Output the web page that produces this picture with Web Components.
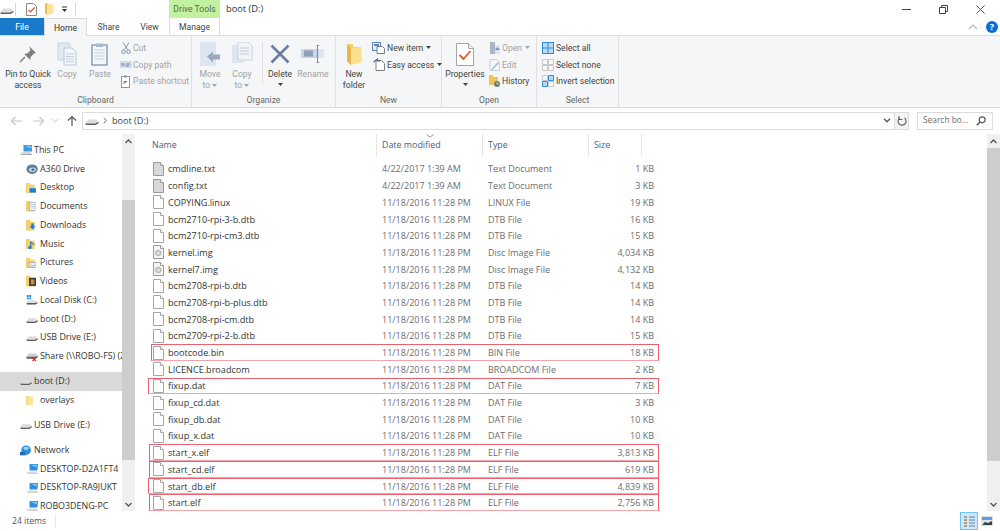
<!DOCTYPE html>
<html><head><meta charset="utf-8">
<style>
html,body{margin:0;padding:0;background:#fff;overflow:hidden}
body{font:9px/1 "Open Sans",sans-serif;color:#3c3c3c}
</style></head><body>
<win-app></win-app>
<script>
const ICONS={
drive:[14,8,'<path d="M3 2.5h8l2.5 2.5v1l-3 1.5H1L.5 6z" fill="#dcdcdc"/><path d="M.5 6l10 .2 3-1.2v1.2L10.5 8H1z" fill="#5c5c5c"/><path d="M1 6.3h9.4" stroke="#fff" stroke-width=".5"/>'],
doccheck:[11,13,'<path d="M.5.5h7l3 3v9H.5z" fill="#fff" stroke="#8a8a8a"/><path d="M2.5 7l2 2 4-4.5" fill="none" stroke="#e0501e" stroke-width="1.2"/>'],
folder:[10,12,'<path d="M1 0h3.5v1.5H9V10H1z" fill="#f5d67e"/><path d="M3 1.5l6.5-.5v9L3 12z" fill="#fbe39a"/><path d="M1 0v10l2 2V1.5z" fill="#eebd4e"/>'],
qa:[7,7,'<path d="M1 1h5" stroke="#333"/><path d="M1 3h5L3.5 6z" fill="#333"/>'],
pin:[18,18,'<path d="M10 1l7 7-2 .6-3.4 3.4-.4 3-6-6 3-.4L11.6 5.200z" fill="#7d7d82"/><path d="M6 12l-5 5" stroke="#7d7d82" stroke-width="1.5"/>'],
copy:[20,24,'<path d="M1 1h11l1 1v16H1z" fill="#e2e8f0" stroke="#c9d4e3"/><path d="M7 6h8l4 4v13H7z" fill="#f2f5f9" stroke="#b9c7da"/><path d="M9 12h8M9 14.500h8M9 17h8M9 19.500h8" stroke="#c3d0e0"/>'],
paste:[18,23,'<rect x="1" y="2" width="15" height="20" fill="#f4f6f9" stroke="#7f93b2" stroke-width="1.3"/><rect x="5" y=".5" width="7" height="3.500" fill="#a9b8cd"/><path d="M3.500 7h10M3.500 10h10M3.500 13h10M3.500 16h10" stroke="#c5d1e0"/>'],
cut:[10,12,'<path d="M2 .5l4.500 7M8 .5L3.500 7.500" stroke="#8d99ab" fill="none"/><circle cx="2.500" cy="9.700" r="1.800" fill="none" stroke="#7d90ad"/><circle cx="7.500" cy="9.700" r="1.800" fill="none" stroke="#7d90ad"/>'],
cpath:[12,7,'<rect width="12" height="7" fill="#cfdcee"/><path d="M2 2v3M4 2v3M6 3h4M6 5h3" stroke="#7a8aa0"/>'],
pshort:[9,13,'<rect x=".5" y="1.500" width="8" height="11" fill="#fff" stroke="#8497b3"/><rect x="3" y=".5" width="3" height="2" fill="#8497b3"/><path d="M3 9V6.500h3M4 8l2-2" stroke="#6a7f9f" fill="none"/>'],
moveto:[22,24,'<rect x="1" y="0" width="16" height="24" fill="#dde5f0"/><path d="M8 14.500L14 9.500v3h7v5h-7v3z" fill="#9aa9bd"/>'],
copyto:[22,24,'<path d="M1 3h12v18H1z" fill="#dde5f0"/><path d="M7 0h10l4 4v14H7z" fill="#f1f4f8" stroke="#c7d2e0"/><path d="M9 6h9M9 9h9M9 12h9" stroke="#bfcbdc"/>'],
del:[20,20,'<path d="M1.500 1.500l17 17M18.500 1.500l-17 17" stroke="#6b7fa0" stroke-width="2.600"/>'],
rename:[24,20,'<rect x="0" y="5" width="18" height="9" fill="#c8d5e6"/><rect x="3" y="6.500" width="9" height="6" fill="#8ea0bb"/><rect x="18" y="5" width="5" height="9" fill="#dde5f0"/><path d="M15 1h4l-2 1v16l2 1h-4l1-1V2z" fill="#7d8ba0"/>'],
bigfolder:[16,21,'<path d="M1 0h6v3h7.500v15H1z" fill="#f3cf6f"/><path d="M5 4l10.500-1v15.500L5 21z" fill="#fbe08e"/><path d="M1 0v17l4 4V4z" fill="#e9b647"/>'],
newitem:[13,12,'<rect x=".5" y=".5" width="8" height="8" fill="#e8eef6" stroke="#5b84b4"/><path d="M2 2h5v2H2z" fill="#5b84b4"/><path d="M5 4.500h5.500l2 2v5H5z" fill="#fff" stroke="#7d7d7d"/>'],
easy:[12,13,'<path d="M3 2.500h5.500l3 3v7H3z" fill="#fff" stroke="#7f7f7f"/><path d="M.5 4l4-3v2H7" stroke="#2f6fb0" stroke-width="1.100" fill="none"/>'],
props:[18,23,'<path d="M.5.5h12l5 5v17H.5z" fill="#fff" stroke="#a4a4a4"/><path d="M12.500.5v5h5" fill="#eee" stroke="#a4a4a4"/><path d="M3.500 12l4 4 7-8" fill="none" stroke="#e05a26" stroke-width="1.800"/>'],
open:[11,12,'<path d="M1 0h5v12H1z" fill="#aab6c6"/><path d="M6 3h4l1 1v8H6z" fill="#dce3ec"/><path d="M8.500 5l2.500 3H6z" fill="#7a8ea9"/>'],
edit:[11,12,'<path d="M1 .5h6.500l3 3V11.500H1z" fill="#f4f7fb" stroke="#c9d3df"/><path d="M2 10.500L8.500 3l1.500 1.500L3.500 11z" fill="#a9c2de"/>'],
hist:[11,12,'<path d="M0 0h4v2h5v8H0z" fill="#f0c65b"/><circle cx="8" cy="9" r="3" fill="#6f7f75"/><path d="M8 7.500V9h1.500" stroke="#fff" stroke-width=".7" fill="none"/>'],
selall:[12,12,'<rect width="12" height="12" fill="#2e8be0"/><path d="M1 1h4.500v4.500H1zM6.500 1H11v4.500H6.500zM1 6.500h4.500V11H1zM6.500 6.500H11V11H6.500z" fill="#b9dbf7"/>'],
selnone:[12,12,'<path d="M.5.5h5v5h-5zM6.500.5h5v5h-5zM.5 6.500h5v5h-5zM6.500 6.500h5v5h-5z" fill="#f8f8f8" stroke="#c8c8c8"/>'],
selinv:[12,12,'<path d="M.5 6.500h5v5h-5zM6.500.500h5v5h-5z" fill="#b9dbf7" stroke="#2e8be0"/><path d="M.5.5h5v5h-5zM6.500 6.500h5v5h-5z" fill="#f8f8f8" stroke="#c8c8c8"/>'],
pc:[14,12,'<path d="M4 0h10v7.500H4z" fill="#3d97dc"/><path d="M5 1l8 0v3z" fill="#7cc4f4"/><path d="M0 9l5-1h7l2 2.500H1z" fill="#d4d8dc"/><path d="M1 10.500h13v1H1z" fill="#9aa0a6"/>'],
a360:[14,12,'<ellipse cx="7" cy="6" rx="6.500" ry="5.500" fill="#5a8199"/><ellipse cx="7.500" cy="6.500" rx="4" ry="2.500" fill="#cfe0ea"/><ellipse cx="8" cy="6.500" rx="2" ry="1.200" fill="#3e6377"/>'],
fdesk:[12,12,'<path d="M0 0h5v2h5v10H0z" fill="#f5cf6b"/><path d="M3 0v12" stroke="#fbe6a8"/><rect x="4" y="6" width="8" height="5" fill="#1b7fd6"/>'],
fdocs:[12,12,'<path d="M0 0h5v2h5v10H0z" fill="#f5cf6b"/><rect x="4" y="1.500" width="6.500" height="9.500" fill="#f5f7fa" stroke="#90a0b5" stroke-width=".7"/><path d="M5.500 4h4M5.500 6h4M5.500 8h4" stroke="#90a0b5" stroke-width=".6"/>'],
fdown:[12,12,'<path d="M0 0h5v2h5v10H0z" fill="#f5cf6b"/><path d="M6 4h3v3h2l-3.500 4L4 7h2z" fill="#2b7cd3"/>'],
fmusic:[12,12,'<path d="M0 0h5v2h5v10H0z" fill="#f5cf6b"/><path d="M5.500 2.500v7" stroke="#2b7cd3" stroke-width="1.400"/><circle cx="4.500" cy="9.700" r="2" fill="#2b7cd3"/><path d="M6 3l4 3.500-1.500.5L6 5z" fill="#2b7cd3"/>'],
fpics:[12,12,'<path d="M0 0h5v2h5v10H0z" fill="#f5cf6b"/><rect x="3.500" y="5" width="8" height="6" fill="#eaf0f7" stroke="#7f93ad" stroke-width=".6"/><path d="M4 10.500l2.500-2.500 2 1.500 2.500-2" stroke="#7f93ad" stroke-width=".8" fill="none"/>'],
fvids:[12,12,'<path d="M0 0h5v2h5v10H0z" fill="#f5cf6b"/><rect x="3.500" y="2" width="8" height="9.500" fill="#39414d"/><rect x="5.500" y="4" width="4" height="5.500" fill="#d98a2c"/>'],
cdisk:[14,12,'<path d="M1 0h2.200v2.200H1zM3.800 0H6v2.200H3.800zM1 2.800h2.200V5H1zM3.800 2.800H6V5H3.800z" fill="#1e90e6"/><path d="M3 6h8l2.500 2.500v1L10.500 11H1L.5 9z" fill="#dcdcdc"/><path d="M.5 9.200h10l3-.7v1L10.500 11H1z" fill="#5c5c5c"/>'],
share:[14,12,'<path d="M3 3h8l2.500 2.500v1.500l-3 1.500H1L.5 6.500z" fill="#d0d0d0"/><path d="M.5 6.500h10l3-.7v1.500l-3 1.500H1z" fill="#666"/><path d="M7.500 7.500l4 4M11.500 7.500l-4 4" stroke="#e4211b" stroke-width="1.300"/>'],
netw:[13,13,'<circle cx="7" cy="6" r="5.500" fill="#2f8fdc"/><path d="M4 3c2-2 6-1 7 1-2 0-2 2-4 2S4 5 4 3z" fill="#9ad1f6"/><path d="M0 8h6v3.500H0z" fill="#1c6db4"/><path d="M0 11.500h7v1.500H0z" fill="#c4ccd4"/>'],
host:[15,12,'<path d="M4 0h10l-1 7.500H4z" fill="#2f8fdc"/><path d="M5 1h8l-.5 3z" fill="#7cc4f4"/><path d="M0 9.500l5-1h7l2 2.500H2z" fill="#d7dade"/><path d="M2 11h12v1H2z" fill="#a7adb3"/>'],
sfolder:[8,11,'<path d="M0 0h3v1h4.500v9H0z" fill="#f5d67e"/><path d="M2 1.500l6-.5v9l-6 1z" fill="#fbe39a"/>'],
txt:[11,14,'<path d="M.5.5h7l3 3v10H.5z" fill="#d9d9d9" stroke="#9a9a9a"/><path d="M7.500.5v3h3" fill="#fff" stroke="#9a9a9a"/>'],
file:[11,14,'<path d="M.5.5h7l3 3v10H.5z" fill="#fff" stroke="#a6a6a6"/><path d="M7.500.5v3h3" fill="#fff" stroke="#a6a6a6"/>'],
img:[11,14,'<path d="M.5.5h7l3 3v10H.5z" fill="#f4f4f4" stroke="#9a9a9a"/><path d="M7.500.5v3h3" fill="#fff" stroke="#9a9a9a"/><circle cx="5.300" cy="8" r="2.800" fill="#cfcfcf" stroke="#999" stroke-width=".6"/><circle cx="5.300" cy="8" r=".8" fill="#fff"/>'],
back:[12,10,'<path d="M12 5H1.500M5.500 1l-4 4 4 4" stroke="#c6c6c6" fill="none" stroke-width="1.200"/>'],
fwd:[12,10,'<path d="M0 5h10.500M6.500 1l4 4-4 4" stroke="#c6c6c6" fill="none" stroke-width="1.200"/>'],
chev:[8,5,'<path d="M1 .8l3 3 3-3" stroke="#c6c6c6" fill="none"/>'],
chevd:[8,5,'<path d="M1 .8l3 3 3-3" stroke="#555" fill="none" stroke-width="1.300"/>'],
up:[10,11,'<path d="M5 11V1.500M1 5.500l4-4 4 4" stroke="#555" fill="none" stroke-width="1.200"/>'],
crumb:[4,7,'<path d="M.8.8l2.400 2.700L.8 6.200" stroke="#666" fill="none"/>'],
refresh:[10,10,'<path d="M3 1.700A4 4 0 1 0 7.500 2" stroke="#666" fill="none" stroke-width="1.200"/><path d="M2 0v3.500h3.500" stroke="#666" fill="none"/>'],
search:[10,10,'<circle cx="6.200" cy="3.800" r="3" fill="none" stroke="#555" stroke-width="1.200"/><path d="M4 6L.8 9.200" stroke="#555" stroke-width="1.600"/>'],
minw:[9,1,'<path d="M0 .5h9" stroke="#444"/>'],
rest:[9,9,'<path d="M.5 2.500h6v6h-6z" fill="none" stroke="#444"/><path d="M2.500 2.500v-2h6v6h-2" fill="none" stroke="#444"/>'],
close:[9,9,'<path d="M.5.5l8 8M8.500.5l-8 8" stroke="#555"/>'],
collapse:[10,6,'<path d="M1 5l4-4 4 4" stroke="#bbb" fill="none" stroke-width="1.200"/>'],
details:[11,11,'<path d="M0 1h3M0 4h3M0 7h3M0 10h3" stroke="#b59a7a" stroke-width="2"/><path d="M5 1h6M5 4h6M5 7h6M5 10h6" stroke="#6f8296"/>'],
large:[12,10,'<rect width="12" height="10" fill="#dfe3e8"/><rect x="1" y="1" width="10" height="3" fill="#5b9bea"/><path d="M1 9l3-3 3 1 4-2v4z" fill="#2f4a3c"/>'],
};
const RF='8.6px "Roboto",sans-serif';
function svg(n,scale){const[i,j,b]=ICONS[n];const s=scale||1;return `<svg xmlns="http://www.w3.org/2000/svg" width="${i*s}" height="${j*s}" viewBox="0 0 ${i} ${j}" style="display:block;flex:none">${b}</svg>`}
function caret(c){return `<svg width="5" height="3" viewBox="0 0 5 3" style="display:inline-block;flex:none;vertical-align:middle"><path d="M0 0h5L2.500 3z" fill="${c||'#444'}"/></svg>`}
class Base extends HTMLElement{
  render(html){if(!this.shadowRoot)this.attachShadow({mode:'open'});this.shadowRoot.innerHTML=html}
  a(n,d=''){return this.getAttribute(n)??d}
}
class XIcon extends Base{connectedCallback(){this.render(`<style>:host{display:block;flex:none}</style>${svg(this.a('name'),+this.a('scale',1))}`)}}
customElements.define('x-icon',XIcon);

class TitleBar extends Base{connectedCallback(){this.render(`<style>
:host{display:flex;height:18px;flex:none;align-items:center;background:#fff;font-size:9.3px;color:#444}
.qa{display:flex;align-items:center;width:169px;height:18px;flex:none}
.sep{width:1px;height:13px;background:#d6d6d6}
.tools{width:51px;height:18px;background:#c2f19f;display:flex;align-items:center;justify-content:center;color:#5a6a50;font:${RF};flex:none}
.t{margin-left:6px;flex:1;color:#333}
.w{display:flex;align-items:center;margin-right:15px}
</style>
<div class="qa">
<x-icon name="drive" style="margin-top:2px"></x-icon><div class="sep" style="margin-left:1px"></div>
<x-icon name="doccheck" style="margin-left:10px"></x-icon><x-icon name="folder" style="margin-left:7px"></x-icon>
<x-icon name="qa" style="margin-left:7px"></x-icon><div class="sep" style="margin-left:7px"></div></div>
<div class="tools">Drive Tools</div><div class="t">boot (D:)</div>
<div class="w"><x-icon name="minw"></x-icon><x-icon name="rest" style="margin-left:28px"></x-icon><x-icon name="close" style="margin-left:28px"></x-icon></div>`)}}
customElements.define('title-bar',TitleBar);

class TabBar extends Base{connectedCallback(){this.render(`<style>
:host{display:flex;flex:none;background:#fff;align-items:stretch;font:${RF};color:#444;border-bottom:1px solid #dadbdc;height:17px}
div{display:flex;align-items:center;justify-content:center;box-sizing:border-box}
.file{width:44px;background:#1979ca;color:#fff}
.home{width:43px;background:#f5f6f7;border:1px solid #dadbdc;border-bottom:0;height:18px;color:#333}
.share{width:43px}.view{width:39px}
.manage{width:51px;border:1px solid #dadbdc;border-width:0 1px;}
.sp{flex:1}
.r{margin-right:2px;gap:8px}
.help{width:12px;height:12px;border-radius:50%;background:#0a6fd0;color:#fff;font:bold 9px "Open Sans",sans-serif}
</style><div class="file">File</div><div class="home">Home</div><div class="share">Share</div><div class="view">View</div><div class="manage">Manage</div><div class="sp"></div>
<div class="r"><x-icon name="collapse"></x-icon><div class="help">?</div></div>`)}}
customElements.define('tab-bar',TabBar);

class RbGroup extends Base{connectedCallback(){this.render(`<style>
:host{display:flex;flex-direction:column;flex:none;box-sizing:border-box;border-right:1px solid #dfe0e2;height:71px}
.b{display:flex;flex:1;min-height:0;align-items:flex-start}
.l{height:14px;display:flex;align-items:center;justify-content:center;font:${RF};color:#666}
</style><div class="b"><slot></slot></div><div class="l">${this.a('label')}</div>`)}}
customElements.define('rb-group',RbGroup);

class RbBig extends Base{connectedCallback(){const dis=this.hasAttribute('dim');const c=dis?'#a3a3a3':'#444';
this.render(`<style>
:host{display:flex;flex-direction:column;align-items:center;flex:none;box-sizing:border-box;font:${RF};color:${c};line-height:11px;text-align:center}
.ic{height:28.5px;display:flex;align-items:center;justify-content:center;margin-top:4px}
.t{white-space:pre-line}
svg{display:inline-block}
.car{height:10px;display:flex;align-items:center}
</style><div class="ic"><x-icon name="${this.a('icon')}"></x-icon></div><div class="t">${this.a('t')}${this.hasAttribute('inl')?' '+caret(c):''}</div>${this.hasAttribute('car')?`<div class="car">${caret(c)}</div>`:''}`)}}
customElements.define('rb-big',RbBig);

class RbSmall extends Base{connectedCallback(){const c=this.hasAttribute('dim')?'#a3a3a3':'#444';
this.render(`<style>
:host{display:flex;align-items:center;height:16.7px;font:${RF};color:${c};white-space:nowrap}
.i{width:13px;display:flex;justify-content:center;flex:none}
.t{margin-left:${this.a('g','2')}px}
</style><div class="i"><x-icon name="${this.a('icon')}"></x-icon></div><div class="t">${this.a('t')}</div>${this.hasAttribute('car')?`<span style="margin-left:3px;display:flex">${caret(c)}</span>`:''}`)}}
customElements.define('rb-small',RbSmall);

class RbStack extends Base{connectedCallback(){this.render(`<style>:host{display:flex;flex-direction:column;flex:none;padding-top:3.5px}</style><slot></slot>`)}}
customElements.define('rb-stack',RbStack);

class RibbonBar extends Base{connectedCallback(){this.render(`<style>
:host{display:flex;flex:none;height:72px;box-sizing:border-box;background:#f5f6f7;border-bottom:1px solid #dadbdc;align-items:flex-start}
.vs{width:1px;height:42px;background:#dfe0e2;margin:6px 0 0 6px;flex:none}
</style>
<rb-group label="Clipboard" style="width:192px">
 <rb-big icon="pin" t="Pin to Quick
access" style="width:56px"></rb-big>
 <rb-big icon="copy" t="Copy" dim style="width:22px"></rb-big>
 <rb-big icon="paste" t="Paste" dim style="width:32px;margin-left:6px"></rb-big>
 <rb-stack style="margin-left:3px"><rb-small icon="cut" dim g="1" t="Cut"></rb-small><rb-small icon="cpath" dim g="1" t="Copy path"></rb-small><rb-small icon="pshort" dim g="1" t="Paste shortcut"></rb-small></rb-stack>
</rb-group>
<rb-group label="Organize" style="width:144px">
 <rb-big icon="moveto" t="Move
to" inl dim style="width:36px"></rb-big>
 <rb-big icon="copyto" t="Copy
to" inl dim style="width:28px"></rb-big>
 <div class="vs"></div>
 <rb-big icon="del" t="Delete" car style="width:34px"></rb-big>
 <rb-big icon="rename" t="Rename" dim style="width:32px"></rb-big>
</rb-group>
<rb-group label="New" style="width:106px">
 <rb-big icon="bigfolder" t="New
folder" style="width:36px"></rb-big>
 <rb-stack><rb-small icon="newitem" t="New item" car></rb-small><rb-small icon="easy" t="Easy access" car></rb-small></rb-stack>
</rb-group>
<rb-group label="Open" style="width:95px">
 <rb-big icon="props" t="Properties" car style="width:46px"></rb-big>
 <rb-stack><rb-small icon="open" dim g="1" t="Open" car></rb-small><rb-small icon="edit" dim g="1" t="Edit"></rb-small><rb-small icon="hist" g="1" t="History"></rb-small></rb-stack>
</rb-group>
<rb-group label="Select" style="width:82px">
 <rb-stack style="margin-left:4px"><rb-small icon="selall" t="Select all"></rb-small><rb-small icon="selnone" t="Select none"></rb-small><rb-small icon="selinv" t="Invert selection"></rb-small></rb-stack>
</rb-group>`)}}
customElements.define('ribbon-bar',RibbonBar);

class AddrBar extends Base{connectedCallback(){this.render(`<style>
:host{display:flex;flex:none;align-items:center;height:26px;box-sizing:border-box;padding-bottom:1px;background:#fff;font-size:9.1px;color:#444}
.nav{display:flex;align-items:center;width:82px;flex:none}
.box{display:flex;align-items:center;width:827px;height:18px;box-sizing:border-box;border:1px solid #dcdcdc;flex:none}
.drv{margin-left:2px}
.c{margin:0 5px 0 4px}
.t{flex:1}
.ref{height:16px;display:flex;align-items:center;justify-content:center;background:#f4f4f4;border-left:1px solid #dcdcdc;margin-left:3px;width:13px}
.s{display:flex;align-items:center;justify-content:space-between;box-sizing:border-box;margin-left:8px;width:76px;height:18px;border:1px solid #dcdcdc;padding:0 6px 0 5px;color:#6d6d6d;font-size:8.4px;flex:none}
</style><div class="nav"><x-icon name="back" style="margin-left:10px"></x-icon><x-icon name="fwd" style="margin-left:11px"></x-icon><x-icon name="chev" style="margin-left:6px"></x-icon><x-icon name="up" style="margin-left:8px"></x-icon></div>
<div class="box"><x-icon name="drive" class="drv"></x-icon><x-icon name="crumb" class="c"></x-icon><div class="t">boot (D:)</div><x-icon name="chevd"></x-icon><div class="ref"><x-icon name="refresh"></x-icon></div></div>
<div class="s"><span>Search bo...</span><x-icon name="search"></x-icon></div>`)}}
customElements.define('addr-bar',AddrBar);

class ScrollBar extends Base{connectedCallback(){this.render(`<style>
:host{display:flex;flex-direction:column;flex:none;width:13px;background:#f0f0f0;box-sizing:border-box}
.a{height:14px;display:flex;align-items:center;justify-content:center;flex:none}
.th{background:#cdcdcd;flex:none;height:${this.a('thumb')}px;margin-top:${this.a('before')}px}
.sp{flex:1}
</style><div class="a"><svg width="7" height="5" viewBox="0 0 7 5"><path d="M.5 4l3-3 3 3" stroke="#555" stroke-width="1.300" fill="none"/></svg></div><div class="th"></div><div class="sp"></div><div class="a"><svg width="7" height="5" viewBox="0 0 7 5"><path d="M.5 1l3 3 3-3" stroke="#555" stroke-width="1.300" fill="none"/></svg></div>`)}}
customElements.define('scroll-bar',ScrollBar);

class NavItem extends Base{connectedCallback(){this.render(`<style>
:host{display:flex;align-items:center;height:18.75px;padding-left:${this.a('pad','26')}px;font-size:8.9px;color:#333;white-space:nowrap;overflow:hidden;box-sizing:border-box;background:${this.hasAttribute('sel')?'#d9d9d9':'transparent'}}
.i{width:14px;display:flex;justify-content:flex-start;align-items:center;flex:none}
</style><div class="i"><x-icon name="${this.a('icon')}" scale="0.87"></x-icon></div><span><slot></slot></span>`)}}
customElements.define('nav-item',NavItem);

class NavPane extends Base{connectedCallback(){this.render(`<style>
:host{display:flex;flex:none;width:136px}
.list{width:122px;padding-top:7px;box-sizing:border-box;overflow:hidden;flex:none}
.g{margin-top:6.250px}
</style><div class="list">
<nav-item pad="20" icon="pc">This PC</nav-item>
<nav-item icon="a360">A360 Drive</nav-item>
<nav-item icon="fdesk">Desktop</nav-item>
<nav-item icon="fdocs">Documents</nav-item>
<nav-item icon="fdown">Downloads</nav-item>
<nav-item icon="fmusic">Music</nav-item>
<nav-item icon="fpics">Pictures</nav-item>
<nav-item icon="fvids">Videos</nav-item>
<nav-item icon="cdisk">Local Disk (C:)</nav-item>
<nav-item icon="drive">boot (D:)</nav-item>
<nav-item icon="drive">USB Drive (E:)</nav-item>
<nav-item icon="share">Share (\\\\ROBO-FS) (Z:)</nav-item>
<nav-item class="g" sel pad="20" icon="drive">boot (D:)</nav-item>
<nav-item icon="sfolder">overlays</nav-item>
<nav-item class="g" pad="20" icon="drive">USB Drive (E:)</nav-item>
<nav-item class="g" pad="20" icon="netw">Network</nav-item>
<nav-item icon="host">DESKTOP-D2A1FT4</nav-item>
<nav-item icon="host">DESKTOP-RA9JUKT</nav-item>
<nav-item icon="host">ROBO3DENG-PC</nav-item>
</div><scroll-bar thumb="260" before="52"></scroll-bar>`)}}
customElements.define('nav-pane',NavPane);

class FileHead extends Base{connectedCallback(){this.render(`<style>
:host{display:grid;grid-template-columns:241px 106px 106px 53px;height:22px;font-size:8.9px;color:#4c607a;position:relative;flex:none}
div{display:flex;align-items:center;border-right:1px solid #e5e5e5;padding-left:5px;height:22px;box-sizing:border-box}
div.nm{padding-left:16px}
svg{position:absolute;left:290px;top:0}
</style><div class="nm">Name</div><div>Date modified</div><div>Type</div><div>Size</div>
<svg width="8" height="4" viewBox="0 0 8 4"><path d="M.5.500l3.500 2.500 3.500-2.500" stroke="#9a9a9a" fill="none"/></svg>`)}}
customElements.define('file-head',FileHead);

class FileRow extends Base{connectedCallback(){const m=this.getAttribute('mark');
this.render(`<style>
:host{display:grid;grid-template-columns:231px 106px 106px 60px;height:16.7px;margin-left:15px;font-size:9px;color:#6d6d6d;align-items:center;position:relative;white-space:nowrap}
.n{display:flex;align-items:center;color:#333;font-size:9.1px}
.i{margin-left:2px;width:15px;flex:none}
.s{text-align:right}
.mk{position:absolute;left:${m}px;width:${508-(+m)}px;top:0;height:16.7px;box-sizing:border-box;border:1px solid #ec5f6c;border-bottom-color:#f4a3aa}
</style><div class="n"><span class="i"><x-icon name="${this.a('icon','file')}"></x-icon></span><slot></slot></div><div>${this.a('date','11/18/2016 11:28 PM')}</div><div>${this.a('type')}</div><div class="s">${this.a('size')}</div>${m!==null?'<div class="mk"></div>':''}`)}}
customElements.define('file-row',FileRow);

const D1='4/22/2017 1:39 AM';
const RW=[['cmdline.txt','txt','Text Document','1 KB',D1],['config.txt','txt','Text Document','3 KB',D1],['COPYING.linux','file','LINUX File','19 KB'],['bcm2710-rpi-3-b.dtb','file','DTB File','16 KB'],['bcm2710-rpi-cm3.dtb','file','DTB File','15 KB'],['kernel.img','img','Disc Image File','4,034 KB'],['kernel7.img','img','Disc Image File','4,132 KB'],['bcm2708-rpi-b.dtb','file','DTB File','14 KB'],['bcm2708-rpi-b-plus.dtb','file','DTB File','14 KB'],['bcm2708-rpi-cm.dtb','file','DTB File','14 KB'],['bcm2709-rpi-2-b.dtb','file','DTB File','15 KB'],['bootcode.bin','file','BIN File','18 KB',0,0],['LICENCE.broadcom','file','BROADCOM File','2 KB'],['fixup.dat','file','DAT File','7 KB',0,-3],['fixup_cd.dat','file','DAT File','3 KB'],['fixup_db.dat','file','DAT File','10 KB'],['fixup_x.dat','file','DAT File','10 KB'],['start_x.elf','file','ELF File','3,813 KB',0,-2],['start_cd.elf','file','ELF File','619 KB',0,-2],['start_db.elf','file','ELF File','4,839 KB',0,-3],['start.elf','file','ELF File','2,756 KB',0,-2]];
class FilePane extends Base{connectedCallback(){this.render(`<style>
:host{display:flex;flex-direction:column;flex:1;min-width:0}
.rows{padding-top:4.650px}
</style><file-head></file-head><div class="rows">${RW.map(r=>`<file-row icon="${r[1]}" type="${r[2]}" size="${r[3]}" ${r[4]?`date="${r[4]}"`:''} ${r[5]!==undefined?`mark="${r[5]}"`:''}>${r[0]}</file-row>`).join('')}</div>`)}}
customElements.define('file-pane',FilePane);

class StatusBar extends Base{connectedCallback(){this.render(`<style>
:host{display:flex;align-items:center;height:20px;flex:none;font-size:8.6px;color:#555;background:#fff}
.c{margin-left:12px;width:43px;height:14px;display:flex;align-items:center;border-right:1px solid #e8e8e8;flex:none}
.sp{flex:1}
.d{width:18px;height:18px;box-sizing:border-box;background:#cce8ff;border:1px solid #74c3f0;display:flex;align-items:center;justify-content:center;margin-right:3px}
.l{margin-right:7px}
</style><div class="c">24 items</div><div class="sp"></div><div class="d"><x-icon name="details"></x-icon></div><x-icon name="large" class="l"></x-icon>`)}}
customElements.define('status-bar',StatusBar);

class WinApp extends Base{connectedCallback(){this.render(`<style>
:host{display:flex;flex-direction:column;width:1000px;height:531px;overflow:hidden;background:#fff}
main{display:flex;height:377px;flex:none;min-height:0}
</style><title-bar></title-bar><tab-bar></tab-bar><ribbon-bar></ribbon-bar><addr-bar></addr-bar>
<main><nav-pane></nav-pane><file-pane></file-pane><scroll-bar thumb="313" before="0"></scroll-bar></main><status-bar></status-bar>`)}}
customElements.define('win-app',WinApp);
</script>
</body></html>
